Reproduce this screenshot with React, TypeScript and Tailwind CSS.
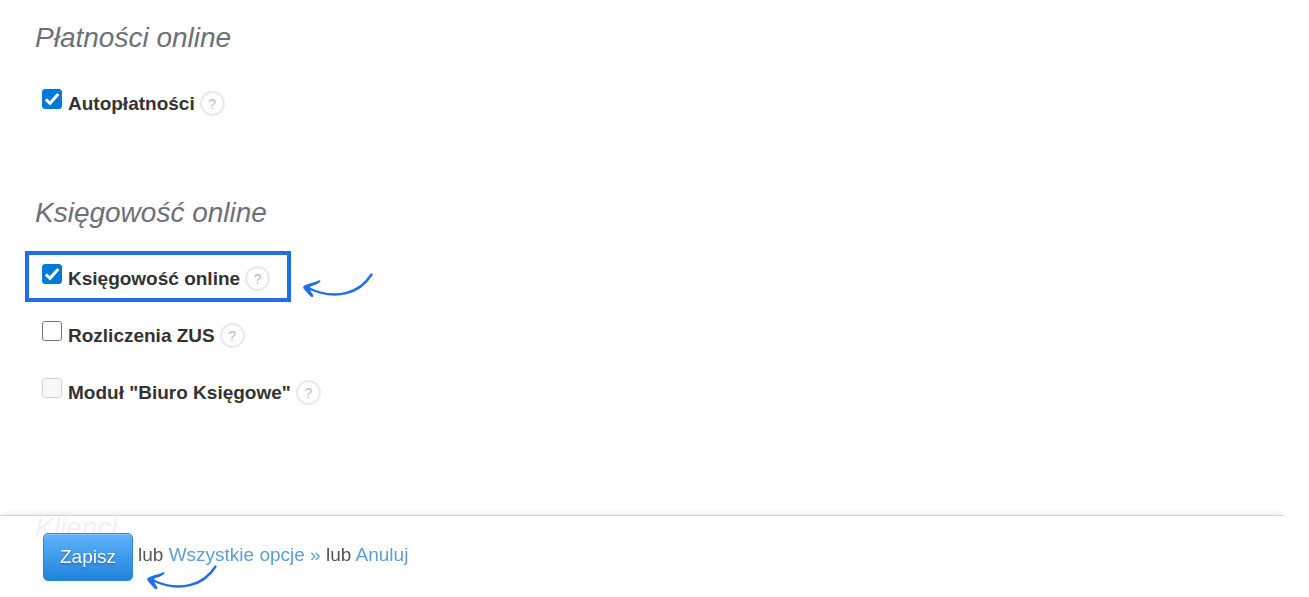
import { useState } from "react";
import type { ReactNode } from "react";

interface CheckboxProps {
  readonly id: string;
  readonly checked?: boolean;
  readonly disabled?: boolean;
  readonly title?: string;
}

interface OptionProps {
  readonly id: string;
  readonly label: string;
  readonly checked?: boolean;
  readonly disabled?: boolean;
  readonly highlighted?: boolean;
}

function Arrow() {
  return (
    <svg width="85" height="40" viewBox="0 0 85 40" fill="none" aria-hidden="true">
      <path
        d="M76.5 9.5C65 28 41 36.500 12 22.500"
        stroke="#1f6feb"
        strokeWidth="2.4"
        strokeLinecap="round"
      />
      <path
        d="M24.300 15.300C25.300 14.800 26 16.200 25 17C22.500 19.200 19 20.400 15.500 21.400L14.500 23.800C15.500 26 17 28.200 18.300 30.300C18.800 31.700 17.200 32.800 16 31.700C13.800 29.500 10.500 26 8.500 23.400C7.800 22.300 8.300 21.200 9.500 20.500C14 18.200 20 17.600 24.300 15.300Z"
        fill="#1f6feb"
      />
    </svg>
  );
}

function Checkbox({ id, checked = false, disabled, title }: CheckboxProps) {
  const [on, setOn] = useState(checked);

  return (
    <span className="relative block size-5 shrink-0">
      <input
        id={id}
        type="checkbox"
        checked={on}
        disabled={disabled}
        aria-label={title}
        onChange={(e) => setOn(e.target.checked)}
        className="block size-5 appearance-none rounded-[3px] border border-[#767676] bg-white checked:border-[#0078d7] checked:bg-[#0078d7] disabled:border-[#d0d0d0] disabled:bg-[#f8f8f8]"
      />
      {on && (
        <svg
          viewBox="0 0 20 20"
          fill="none"
          stroke="white"
          strokeWidth="3"
          className="pointer-events-none absolute inset-0 size-5"
          aria-hidden="true"
        >
          <path d="M3.800 10.300L8 14.300L16.300 5" />
        </svg>
      )}
    </span>
  );
}

function Option({ id, label, checked, disabled, highlighted }: OptionProps) {
  return (
    <div
      className={
        highlighted
          ? "relative flex h-[51px] w-fit items-center border-4 border-[#1f6feb] pt-1 pr-[17px] pl-[13px]"
          : "relative flex h-[51px] w-fit items-center border-4 border-transparent pt-1 pr-[17px] pl-[13px]"
      }
    >
      <div className="mr-[6px] mb-[10px]">
        <Checkbox id={id} checked={checked} disabled={disabled} />
      </div>
      <label htmlFor={id} className="mr-[5px] text-[19px] leading-6 font-bold text-[#333]">
        {label}
      </label>
      <button
        type="button"
        className="size-[25px] rounded-full border-2 border-[#e9e9e9] text-[14px] leading-5 text-[#bbb]"
      >
        ?
      </button>
      {highlighted && (
        <div className="absolute top-[10px] left-full ml-2">
          <Arrow />
        </div>
      )}
    </div>
  );
}

function Section({ title, children }: { readonly title: string; readonly children: ReactNode }) {
  return (
    <section>
      <h2 className="mb-[18px] px-[10px] text-[28px] leading-10 text-[#6d7078] italic">{title}</h2>
      <div className="flex flex-col gap-[6px]">{children}</div>
    </section>
  );
}

export default function App() {
  return (
    <div className="h-screen overflow-hidden bg-white font-['Liberation_Sans',Arial,sans-serif]">
      <main className="px-[25px] pt-[18px]">
        <div className="mb-[66px]">
          <Section title="Płatności online">
            <Option id="autopay" label="Autopłatności" checked />
          </Section>
        </div>
        <div className="mb-[92px]">
          <Section title="Księgowość online">
            <Option id="accounting" label="Księgowość online" checked highlighted />
            <Option id="zus" label="Rozliczenia ZUS" />
            <Option id="office" label={'Moduł "Biuro Księgowe"'} disabled />
          </Section>
        </div>
        <Section title="Klienci">
          <div className="h-4 overflow-hidden pt-3 pl-[17px]">
            <Checkbox id="clients" title="Klienci" checked />
          </div>
        </Section>
      </main>

      <footer className="fixed right-[25px] bottom-0 left-0 h-[82px] border-t border-[#d8d8d8] bg-white/90 pt-[17px] pl-[43px] shadow-[0_-4px_5px_-3px_rgba(0,0,0,0.12)]">
        <div className="relative flex items-center gap-[5px] text-[19px] leading-6 text-[#555]">
          <button
            type="button"
            className="h-[48px] w-[90px] rounded-[5px] border border-[#2f88cf] bg-linear-to-b from-[#5fb3fb] to-[#1c82db] text-[19px] text-white shadow-[inset_0_1px_0_rgba(255,255,255,0.25)] text-shadow-[0_1px_2px_rgba(0,0,0,0.35)]"
          >
            Zapisz
          </button>
          <p className="pb-1">
            lub{" "}
            <a href="#all" className="text-[#5b9fd8]">
              Wszystkie opcje »
            </a>{" "}
            lub{" "}
            <a href="#cancel" className="text-[#5b9fd8]">
              Anuluj
            </a>
          </p>
          <div className="pointer-events-none absolute top-6 left-24">
            <Arrow />
          </div>
        </div>
      </footer>
    </div>
  );
}
